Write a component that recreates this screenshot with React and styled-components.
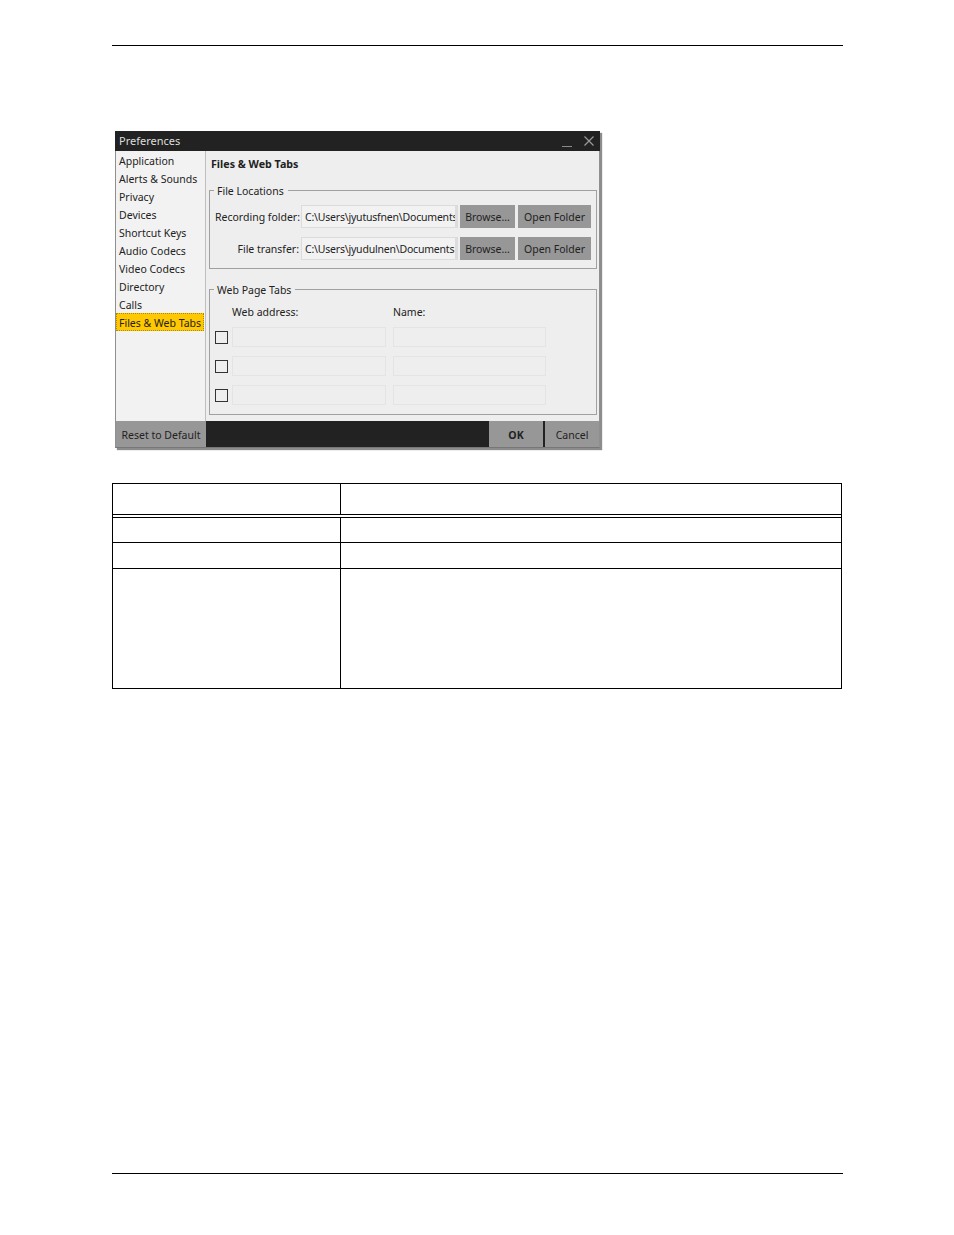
import { createGlobalStyle } from "styled-components";
import styled from "styled-components";

const Global = createGlobalStyle`
  html, body { margin: 0; padding: 0; background: #fff; }
  body { font-family: "Noto Sans", "Open Sans", sans-serif; }
`;

const Page = styled.div`
  width: 954px;
  height: 1235px;
  box-sizing: border-box;
  padding-top: 45px;
  display: flex;
  flex-direction: column;
`;

const Rule = styled.div`
  width: 731px;
  height: 1px;
  margin-left: 112px;
  margin-bottom: ${(p) => p.$bottom || 0}px;
  background: #000;
`;

const Dialog = styled.div`
  width: 485px;
  height: 317px;
  margin: 85px 0 0 115px;
  display: flex;
  flex-direction: column;
  background: #eee;
  box-shadow: 2px 2px 1px #8c8c8c;
  font-size: 10.5px;
  color: #222;
`;

const TitleBar = styled.div`
  height: 20px;
  flex: none;
  background: #222;
  color: #ddd;
  display: flex;
  align-items: center;
  justify-content: space-between;
  padding: 0 6px 0 4px;
  font-size: 11px;
`;

const TitleText = styled.span`
  padding-bottom: 2px;
`;

const WindowIcons = styled.div`
  display: flex;
  align-items: center;
  gap: 12px;
  svg { display: block; }
`;

const Body = styled.div`
  flex: 1;
  min-height: 0;
  display: flex;
  border-left: 1px solid #8f8f8f;
  border-right: 1px solid #8f8f8f;
`;

const Sidebar = styled.div`
  width: 89px;
  flex: none;
  background: #f2f2f2;
  border-right: 1px solid #bdbdbd;
  padding-top: 2px;
  display: flex;
  flex-direction: column;
`;

const NavItem = styled.div`
  height: 18px;
  line-height: 17px;
  box-sizing: border-box;
  padding-left: 3px;
  white-space: nowrap;
  ${(p) => p.$active && `
    background: #ffc800;
    outline: 1px dotted #b08a00;
    outline-offset: -1px;
    margin: -2px 1px 0 0;
    line-height: 20px;
  `}
`;

const Content = styled.div`
  flex: 1;
  padding: 6px 2px 0 3px;
  display: flex;
  flex-direction: column;
`;

const Heading = styled.div`
  height: 27px;
  line-height: 14px;
  padding-left: 2px;
  font-size: 10.7px;
  font-weight: 700;
`;

const Group = styled.fieldset`
  margin: 0;
  padding: 0;
  border: 1px solid #a0a0a0;
  box-sizing: border-box;
  min-width: 0;
  height: ${(p) => p.$height}px;
  margin-top: ${(p) => p.$top}px;
`;

const Legend = styled.legend`
  margin-left: 4px;
  padding: 1px 4px 0 3px;
  line-height: 12px;
`;

const Gap = styled.div`
  height: ${(p) => p.$size}px;
`;

const PathRow = styled.div`
  display: flex;
  align-items: center;
  height: 23px;
  margin-bottom: 9px;
  padding-left: 5px;
`;

const PathLabel = styled.div`
  width: 86px;
  flex: none;
  text-align: right;
  padding-right: 2px;
  box-sizing: border-box;
  white-space: nowrap;
`;

const PathField = styled.div`
  width: 157px;
  height: 23px;
  box-sizing: border-box;
  flex: none;
  border: 1px solid #dcdcdc;
  border-right-width: 3px;
  background: #f2f2f2;
  padding-left: 3px;
  line-height: 23px;
  letter-spacing: -0.2px;
  overflow: hidden;
  white-space: nowrap;
  margin-right: 2px;
`;

const GrayButton = styled.div`
  height: 23px;
  width: ${(p) => p.$width}px;
  flex: none;
  background: #979797;
  margin-right: ${(p) => p.$gap || 0}px;
  text-align: center;
  line-height: 25px;
  white-space: nowrap;
`;

const AddressHead = styled.div`
  display: flex;
  height: 20px;
  align-items: center;
  padding-left: 22px;
`;

const AddressCol = styled.div`
  width: 161px;
`;

const TabRow = styled.div`
  display: flex;
  align-items: center;
  height: 20px;
  margin-bottom: 9px;
  padding-left: 5px;
`;

const Check = styled.div`
  width: 13px;
  height: 13px;
  box-sizing: border-box;
  border: 1px solid #333;
  flex: none;
  margin-right: 4px;
`;

const Blank = styled.div`
  height: 20px;
  box-sizing: border-box;
  width: ${(p) => p.$width}px;
  margin-right: ${(p) => p.$gap || 0}px;
  flex: none;
  border: 1px solid #e4e4e4;
`;

const Footer = styled.div`
  height: 27px;
  flex: none;
  background: #222;
  display: flex;
  border-left: 1px solid #8f8f8f;
  border-right: 1px solid #8f8f8f;
  border-bottom: 1px solid #777;
  box-sizing: border-box;
`;

const FootButton = styled.div`
  width: ${(p) => p.$width}px;
  background: #979797;
  margin-left: ${(p) => p.$left || 0}px;
  text-align: center;
  line-height: 29px;
  font-weight: ${(p) => (p.$bold ? 700 : 400)};
  white-space: nowrap;
`;

const Table = styled.div`
  width: 730px;
  margin: 35px 0 0 112px;
  box-sizing: border-box;
  border: 1px solid #000;
  border-bottom: 0;
`;

const TableRow = styled.div`
  display: grid;
  grid-template-columns: 228px 1fr;
  height: ${(p) => p.$height}px;
  box-sizing: border-box;
  border-bottom: ${(p) => (p.$double ? "4px double #000" : "1px solid #000")};
  div:first-child { border-right: 1px solid #000; }
`;

const Spacer = styled.div`
  flex: 1;
`;

const navItems = [
  "Application",
  "Alerts & Sounds",
  "Privacy",
  "Devices",
  "Shortcut Keys",
  "Audio Codecs",
  "Video Codecs",
  "Directory",
  "Calls",
];

export default function App() {
  return (
    <Page>
      <Global />
      <Rule />
      <Dialog>
        <TitleBar>
          <TitleText>Preferences</TitleText>
          <WindowIcons>
            <svg width="10" height="11" viewBox="0 0 10 11">
              <path d="M0 10.5h10" stroke="#8a8a8a" strokeWidth="1" />
            </svg>
            <svg width="10" height="10" viewBox="0 0 10 10">
              <path d="M.5.5l9 9M9.5.5l-9 9" stroke="#9a9a9a" strokeWidth="1.2" fill="none" />
            </svg>
          </WindowIcons>
        </TitleBar>
        <Body>
          <Sidebar>
            {navItems.map((item) => (
              <NavItem key={item}>{item}</NavItem>
            ))}
            <NavItem $active>Files &amp; Web Tabs</NavItem>
          </Sidebar>
          <Content>
            <Heading>Files &amp; Web Tabs</Heading>
            <Group $height={85} $top={0}>
              <Legend>File Locations</Legend>
              <Gap $size={8} />
              <PathRow>
                <PathLabel>Recording folder:</PathLabel>
                <PathField>C:\Users\jyutusfnen\Documents</PathField>
                <GrayButton $width={55} $gap={3}>Browse...</GrayButton>
                <GrayButton $width={73}>Open Folder</GrayButton>
              </PathRow>
              <PathRow>
                <PathLabel>File transfer:</PathLabel>
                <PathField>C:\Users\jyudulnen\Documents</PathField>
                <GrayButton $width={55} $gap={3}>Browse...</GrayButton>
                <GrayButton $width={73}>Open Folder</GrayButton>
              </PathRow>
            </Group>
            <Group $height={132} $top={14}>
              <Legend>Web Page Tabs</Legend>
              <Gap $size={6} />
              <AddressHead>
                <AddressCol>Web address:</AddressCol>
                <span>Name:</span>
              </AddressHead>
              <Gap $size={5} />
              {[0, 1, 2].map((i) => (
                <TabRow key={i}>
                  <Check />
                  <Blank $width={154} $gap={7} />
                  <Blank $width={153} />
                </TabRow>
              ))}
            </Group>
          </Content>
        </Body>
        <Footer>
          <FootButton $width={90}>Reset to Default</FootButton>
          <Spacer />
          <FootButton $width={54} $bold>OK</FootButton>
          <FootButton $width={54} $left={2}>Cancel</FootButton>
        </Footer>
      </Dialog>
      <Table>
        <TableRow $height={34} $double><div /><div /></TableRow>
        <TableRow $height={25}><div /><div /></TableRow>
        <TableRow $height={26}><div /><div /></TableRow>
        <TableRow $height={120}><div /><div /></TableRow>
      </Table>
      <Spacer />
      <Rule $bottom={61} />
    </Page>
  );
}
